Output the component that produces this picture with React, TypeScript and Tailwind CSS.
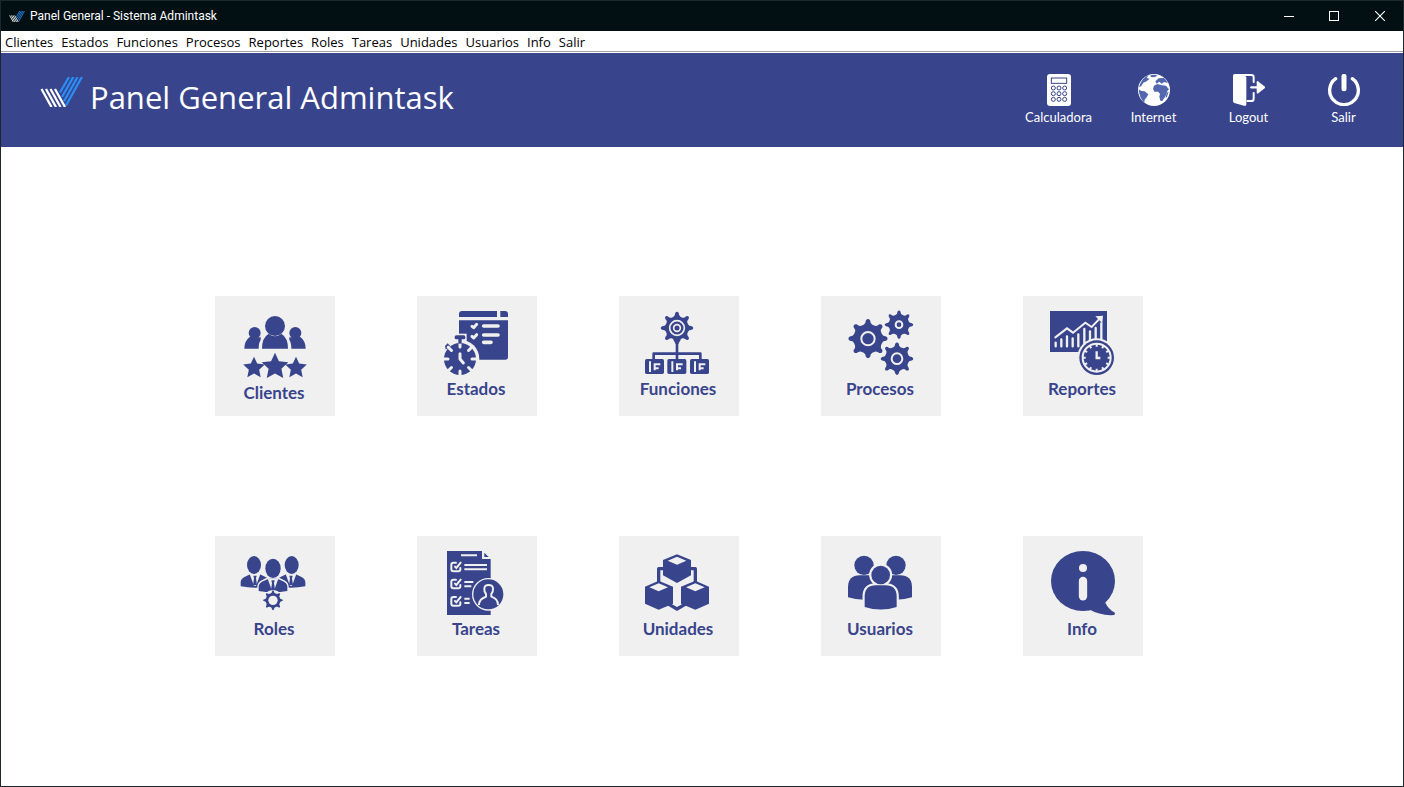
import type { ReactNode } from "react";

const INK = "#38448b";
const PAPER = "#f0f0f0";

function gear(cx: number, cy: number, outer: number, root: number, teeth: number) {
  const step = (Math.PI * 2) / teeth;
  const at = (r: number, a: number) =>
    `${(cx + r * Math.sin(a)).toFixed(1)} ${(cy - r * Math.cos(a)).toFixed(1)}`;
  let d = "";
  for (let i = 0; i < teeth; i++) {
    const a = i * step;
    d += `${i ? "L" : "M"}${at(root, a - step * 0.38)}`;
    d += `Q${at(root + 1, a - step * 0.2)} ${at(outer - 4, a - step * 0.15)}`;
    d += `Q${at(outer + 4, a)} ${at(outer - 4, a + step * 0.15)}`;
    d += `Q${at(root + 1, a + step * 0.2)} ${at(root, a + step * 0.38)}`;
  }
  return d + "Z";
}

function star(cx: number, cy: number, r: number) {
  let d = "";
  for (let i = 0; i < 10; i++) {
    const a = (i * Math.PI) / 5;
    const k = i % 2 ? r * 0.48 : r;
    d += `${i ? "L" : "M"}${(cx + k * Math.sin(a)).toFixed(1)} ${(cy - k * Math.cos(a)).toFixed(1)}`;
  }
  return d + "Z";
}

function ticks(cx: number, cy: number, from: number, to: number, count: number) {
  let d = "";
  for (let i = 0; i < count; i++) {
    const a = (i * Math.PI * 2) / count;
    const s = Math.sin(a);
    const c = Math.cos(a);
    d += `M${(cx + from * s).toFixed(1)} ${(cy - from * c).toFixed(1)}L${(cx + to * s).toFixed(1)} ${(cy - to * c).toFixed(1)}`;
  }
  return d;
}

function TileIcon({ children, tall = false }: { children: ReactNode; tall?: boolean }) {
  return (
    <svg
      aria-hidden="true"
      viewBox={tall ? "81 45 192 204" : "81 45 192 192"}
      className={tall ? "h-[68px] w-16 overflow-visible" : "h-16 w-16 overflow-visible"}
      fill={INK}
    >
      {children}
    </svg>
  );
}

const clientes = (
  <TileIcon tall>
    <circle cx="180" cy="90" r="30" />
    <path d="M141 158Q141 125 161 113Q180 128 199 113Q219 125 219 158Z" />
    <circle cx="119" cy="111" r="18" />
    <path d="M88 158Q88 134 105 122Q122 130 137 123V132Q131 140 131 158Z" />
    <circle cx="241" cy="111" r="18" />
    <path d="M272 158Q272 134 255 122Q238 130 223 123V132Q229 140 229 158Z" />
    <path d={star(117, 216, 34)} />
    <path d={star(243, 216, 34)} />
    <path d={star(180, 212, 42)} />
  </TileIcon>
);

const estados = (
  <TileIcon>
    <path d="M126 63V54Q126 45 135 45H240V63Z" />
    <path d="M250 45H264Q273 45 273 54V63H250Z" />
    <path d="M126 73H273V183Q273 191 265 191H126Z" />
    <circle cx="129" cy="189" r="58" fill={PAPER} />
    <rect x="109" y="113" width="40" height="22" fill={PAPER} />
    <circle cx="129" cy="189" r="48" />
    <rect x="113" y="118" width="32" height="12" rx="5" />
    <path d="M84 150L92 142L99 149L96 157L86 160Z" />
    <path d={ticks(129, 189, 36, 50, 8)} stroke={PAPER} strokeWidth="9" strokeLinecap="round" />
    <path d="M124 128H134V143H124Z" />
    <g fill="none" stroke={PAPER} strokeLinecap="round" strokeLinejoin="round">
      <path d="M129 173V189L139 201" strokeWidth="9" />
      <path d="M165 91L170 95L179 85M165 121L170 126L179 116" strokeWidth="9" />
      <path d="M200 90H243M200 117H243M200 139H222" strokeWidth="11" />
    </g>
  </TileIcon>
);

const funciones = (
  <TileIcon>
    <path d={gear(174, 96, 49, 35, 8)} />
    <path d="M162 130L174 150L186 130Z" />
    <circle cx="174" cy="96" r="22" fill="none" stroke={PAPER} strokeWidth="5" />
    <circle cx="174" cy="96" r="10" fill="none" stroke={PAPER} strokeWidth="5" />
    <path d="M174 134V192M104 192V173H244V192" fill="none" stroke={INK} strokeWidth="8" strokeLinejoin="round" />
    {[78, 145, 213].map((x) => (
      <g key={x}>
        <rect x={x} y="189" width="57" height="45" rx="5" />
        <path
          d={`M${x + 15} 196V228M${x + 29} 202V223M${x + 29} 205H${x + 46}M${x + 29} 217H${x + 41}`}
          stroke={PAPER}
          strokeWidth="6"
          fill="none"
        />
      </g>
    ))}
  </TileIcon>
);

const procesos = (
  <TileIcon>
    <path d={gear(141, 128, 59, 44, 8)} />
    <circle cx="141" cy="128" r="20" fill="none" stroke={PAPER} strokeWidth="6" />
    <path d={gear(234, 86, 43, 31, 8)} />
    <circle cx="234" cy="86" r="10" fill="none" stroke={PAPER} strokeWidth="6" />
    <path d={gear(228, 188, 49, 36, 8)} />
    <circle cx="228" cy="188" r="16" fill="none" stroke={PAPER} strokeWidth="6" />
  </TileIcon>
);

const reportes = (
  <TileIcon>
    <path d="M81 45H252V168H81Z" />
    <g fill="none" stroke={PAPER} strokeWidth="7" strokeLinecap="round">
      <path d="M98 140V151M115 130V151M132 121V151M149 127V151M166 115V151M184 99V151M201 106V151M218 96V151M235 82V151" />
      <path d="M97 124L132 97L150 110L187 80L206 93L230 68" strokeWidth="6" />
    </g>
    <path d="M217 61L240 59L238 82Z" fill={PAPER} />
    <circle cx="221" cy="185" r="58" fill={PAPER} />
    <circle cx="221" cy="185" r="52" />
    <circle cx="221" cy="185" r="42" fill="none" stroke={PAPER} strokeWidth="6" />
    <path d={ticks(221, 185, 33, 42, 12)} stroke={PAPER} strokeWidth="6" />
    <path d="M221 166V186H232" fill="none" stroke={PAPER} strokeWidth="7" />
  </TileIcon>
);

const suit = (
  <>
    <path d="M-43 36V23Q-42 12 -30 7L-13 -1H13L30 7Q42 12 43 23V36Q0 44 -43 36Z" />
    <path d="M-16 -1L-3 35H3L16 -1Z" fill={PAPER} />
    <path d="M-5 4H5L3 12L6 33H-6L-3 12Z" />
  </>
);

const roles = (
  <TileIcon>
    <g transform="translate(120 115)">{suit}</g>
    <g transform="translate(228 115)">{suit}</g>
    <ellipse cx="117" cy="87" rx="21" ry="27" />
    <ellipse cx="230" cy="87" rx="21" ry="27" />
    <path
      d="M131 166V151Q132 139 146 134L161 127H187L202 134Q216 139 217 151V166Q174 174 131 166Z"
      fill={PAPER}
      stroke={PAPER}
      strokeWidth="8"
    />
    <g transform="translate(174 129)">{suit}</g>
    <ellipse cx="174" cy="97" rx="23" ry="29" />
    <circle cx="174" cy="193" r="31" fill={PAPER} />
    <path d={gear(174, 193, 30, 22, 8)} />
    <circle cx="174" cy="193" r="14" fill={PAPER} />
  </TileIcon>
);

const tareas = (
  <TileIcon>
    <path d="M90 45H195V69H221V237H90Z" />
    <path d="M202 50L215 63H202Z" />
    <g fill="none" stroke={PAPER} strokeWidth="6">
      <path d="M132 58H180M142 87H210M142 100H210M142 138H169M142 151H163M142 188H158M142 201H158" />
      {[93, 144, 196].map((y) => (
        <g key={y} strokeLinecap="round">
          <path d={`M117 ${y - 13}H109Q103 ${y - 13} 103 ${y - 7}V${y + 7}Q103 ${y + 13} 109 ${y + 13}H124Q130 ${y + 13} 130 ${y + 7}V${y + 3}`} />
          <path d={`M114 ${y - 1}L118 ${y + 3}L131 ${y - 13}`} />
        </g>
      ))}
    </g>
    <circle cx="214" cy="175" r="49" fill={PAPER} />
    <circle cx="214" cy="175" r="45" />
    <g fill="none" stroke={PAPER} strokeWidth="6" strokeLinejoin="round">
      <path d="M186 207Q186 188 207 182V174Q201 168 202 157Q203 147 215 147Q227 147 228 157Q229 168 223 174V182Q243 188 243 207" />
    </g>
  </TileIcon>
);

const unidades = (
  <TileIcon>
    <path
      d="M134 98H119V142M214 98H229V142M146 203L174 219L202 203"
      fill="none"
      stroke={INK}
      strokeWidth="10"
      strokeLinejoin="round"
    />
    <path d="M174 55L216 72V118L174 141L132 118V72Z" />
    <path d="M174 62L202 74L174 86L146 74Z" fill={PAPER} />
    <path d="M119 134L162 152V203L119 221L78 203V152Z" />
    <path d="M119 142L147 154L119 166L91 154Z" fill={PAPER} />
    <path d="M229 134L186 152V203L229 221L270 203V152Z" />
    <path d="M229 142L257 154L229 166L201 154Z" fill={PAPER} />
  </TileIcon>
);

const usuarios = (
  <TileIcon>
    <circle cx="129" cy="88" r="29" />
    <circle cx="225" cy="88" r="29" />
    <path d="M81 184V154Q81 118 117 118H160V191Q115 195 81 184Z" />
    <path d="M273 184V154Q273 118 237 118H194V191Q239 195 273 184Z" />
    <g stroke={PAPER} strokeWidth="13" fill={PAPER}>
      <circle cx="179" cy="117" r="28" />
      <path d="M131 213V182Q131 148 165 148H193Q227 148 227 182V213Q179 228 131 213Z" />
    </g>
    <circle cx="179" cy="117" r="28" />
    <path d="M131 213V182Q131 148 165 148H193Q227 148 227 182V213Q179 228 131 213Z" />
  </TileIcon>
);

const info = (
  <TileIcon>
    <ellipse cx="180" cy="135" rx="96" ry="90" />
    <path d="M198 220Q232 240 274 237Q278 233 274 229Q256 219 247 200Z" />
    <circle cx="180" cy="96" r="12" fill={PAPER} />
    <path d="M180 135V181" stroke={PAPER} strokeWidth="25" strokeLinecap="round" />
  </TileIcon>
);

const calculadora = (
  <svg aria-hidden="true" viewBox="126 222 96 96" className="size-8" fill="#fff">
    <rect x="138" y="222" width="72" height="96" rx="9" />
    <g fill="none" stroke={INK} strokeWidth="3">
      <rect x="151" y="234" width="46" height="16" />
      {[264, 281, 298].map((cy) =>
        [157, 174, 191].map((cx) => <circle key={`${cx}-${cy}`} cx={cx} cy={cy} r="6" />),
      )}
    </g>
  </svg>
);

const internet = (
  <svg aria-hidden="true" viewBox="414 222 96 96" className="size-8">
    <circle cx="462" cy="270" r="48" fill="#fff" />
    <g fill="#5367ae">
      <path d="M417 262Q422 241 437 230L446 226L440 234L449 236L440 244L430 248L424 258Z" />
      <path d="M416 268L424 273L434 274L445 283L440 292L434 299L433 309Q418 294 416 268Z" />
      <path d="M466 244L476 235L492 234Q499 240 504 249L492 246L485 251L478 245L470 251Z" />
      <path d="M462 257L472 252L486 256L498 257L507 268L502 273L497 288L487 303L481 302L478 290L480 281L474 275L463 275L459 266Z" />
      <path d="M451 226L464 224L473 227L462 232L453 231Z" />
      <path d="M500 278L506 275L501 290L497 294Z" />
    </g>
  </svg>
);

const logout = (
  <svg aria-hidden="true" viewBox="699 222 96 96" className="size-8" fill="#fff">
    <path d="M699 227Q699 222 704 222H728L739 231V314Q738 319 732 317L703 309Q699 308 699 304Z" />
    <path
      d="M728 225H754Q761 225 761 232V246M742 303H754Q761 303 761 296V279"
      fill="none"
      stroke="#fff"
      strokeWidth="6"
      strokeLinecap="round"
    />
    <path d="M754 262H778" stroke="#fff" strokeWidth="7" strokeLinecap="round" />
    <path d="M773 243L795 260V264L773 281Q770 281 770 277V247Q770 243 773 243Z" />
  </svg>
);

const salir = (
  <svg aria-hidden="true" viewBox="984 222 96 96" className="size-8" fill="none" stroke="#fff" strokeLinecap="round">
    <path d="M1007 236A43 43 0 1 0 1057 236" strokeWidth="10" />
    <path d="M1032 229V266" strokeWidth="15" />
  </svg>
);

function Logo({ className }: { className: string }) {
  return (
    <svg aria-hidden="true" viewBox="40 77 43 30" className={className} fill="none" strokeWidth="2.3">
      <path d="M41.5 89L51.5 107M46 89L56 107M50.5 89L60.5 107M55 89L65 107" stroke="#fff" />
      <path d="M69 77L60 92.5M73.3 77L62 97M77.6 77L64 101.2M81.9 77L66 105.5" stroke="#2b8cf5" />
    </svg>
  );
}

const menu = [
  "Clientes",
  "Estados",
  "Funciones",
  "Procesos",
  "Reportes",
  "Roles",
  "Tareas",
  "Unidades",
  "Usuarios",
  "Info",
  "Salir",
];

const actions = [
  { label: "Calculadora", icon: calculadora },
  { label: "Internet", icon: internet },
  { label: "Logout", icon: logout },
  { label: "Salir", icon: salir },
];

const tiles = [
  { label: "Clientes", icon: clientes },
  { label: "Estados", icon: estados },
  { label: "Funciones", icon: funciones },
  { label: "Procesos", icon: procesos },
  { label: "Reportes", icon: reportes },
  { label: "Roles", icon: roles },
  { label: "Tareas", icon: tareas },
  { label: "Unidades", icon: unidades },
  { label: "Usuarios", icon: usuarios },
  { label: "Info", icon: info },
];

export default function App() {
  return (
    <div className="flex min-h-screen flex-col border border-[#1c282c] bg-white font-['Open_Sans',sans-serif]">
      <div className="flex h-[30px] items-center bg-[#020f13] pl-2 text-white">
        <Logo className="h-[11px] w-4" />
        <span className="ml-[5px] font-['Roboto',sans-serif] text-[12px] leading-4">
          Panel General - Sistema Admintask
        </span>
        <div className="ml-auto flex h-full">
          <button type="button" aria-label="Minimizar" className="flex h-full w-[45px] items-center justify-center">
            <svg viewBox="0 0 10 10" className="size-[10px]" shapeRendering="crispEdges">
              <path d="M0 5h10v1H0z" fill="#fff" />
            </svg>
          </button>
          <button type="button" aria-label="Maximizar" className="flex h-full w-[46px] items-center justify-center">
            <svg viewBox="0 0 10 10" className="size-[10px]">
              <rect x=".5" y=".5" width="9" height="9" fill="none" stroke="#fff" />
            </svg>
          </button>
          <button type="button" aria-label="Cerrar" className="flex h-full w-[46px] items-center justify-center">
            <svg viewBox="0 0 10 10" className="size-[10px]">
              <path d="M0 0l10 10M10 0L0 10" stroke="#fff" strokeWidth="1.1" />
            </svg>
          </button>
        </div>
      </div>

      <nav className="flex h-[21px] items-end gap-2 border-b border-[#a0a0a0] pl-1 text-[13px] leading-[18px] text-black">
        {menu.map((item) => (
          <button key={item} type="button">
            {item}
          </button>
        ))}
      </nav>

      <header className="mt-px flex h-[94px] items-center justify-between bg-[#38448b] pr-3 pl-[39px] text-white">
        <div className="flex items-start gap-[7px] pb-[6px]">
          <Logo className="h-[30px] w-[43px]" />
          <h1 className="text-[31px] leading-10">Panel General Admintask</h1>
        </div>
        <div className="flex">
          {actions.map(({ label, icon }) => (
            <button
              key={label}
              type="button"
              className="flex w-[95px] flex-col items-center gap-[2px] font-['Lato',sans-serif] text-[13px] leading-[18px]"
            >
              {icon}
              {label}
            </button>
          ))}
        </div>
      </header>

      <main className="flex justify-center pt-[149px] pr-[46px] pb-12">
        <div className="grid grid-cols-5 gap-x-[82px] gap-y-[120px]">
          {tiles.map(({ label, icon }) => (
            <button
              key={label}
              type="button"
              className="flex size-[120px] flex-col items-center bg-[#f0f0f0] pt-[15px] pr-[2px] font-['Lato',sans-serif] text-[17px] leading-6 font-bold text-[#38448b]"
            >
              {icon}
              <span className="mt-[2px]">{label}</span>
            </button>
          ))}
        </div>
      </main>
    </div>
  );
}
